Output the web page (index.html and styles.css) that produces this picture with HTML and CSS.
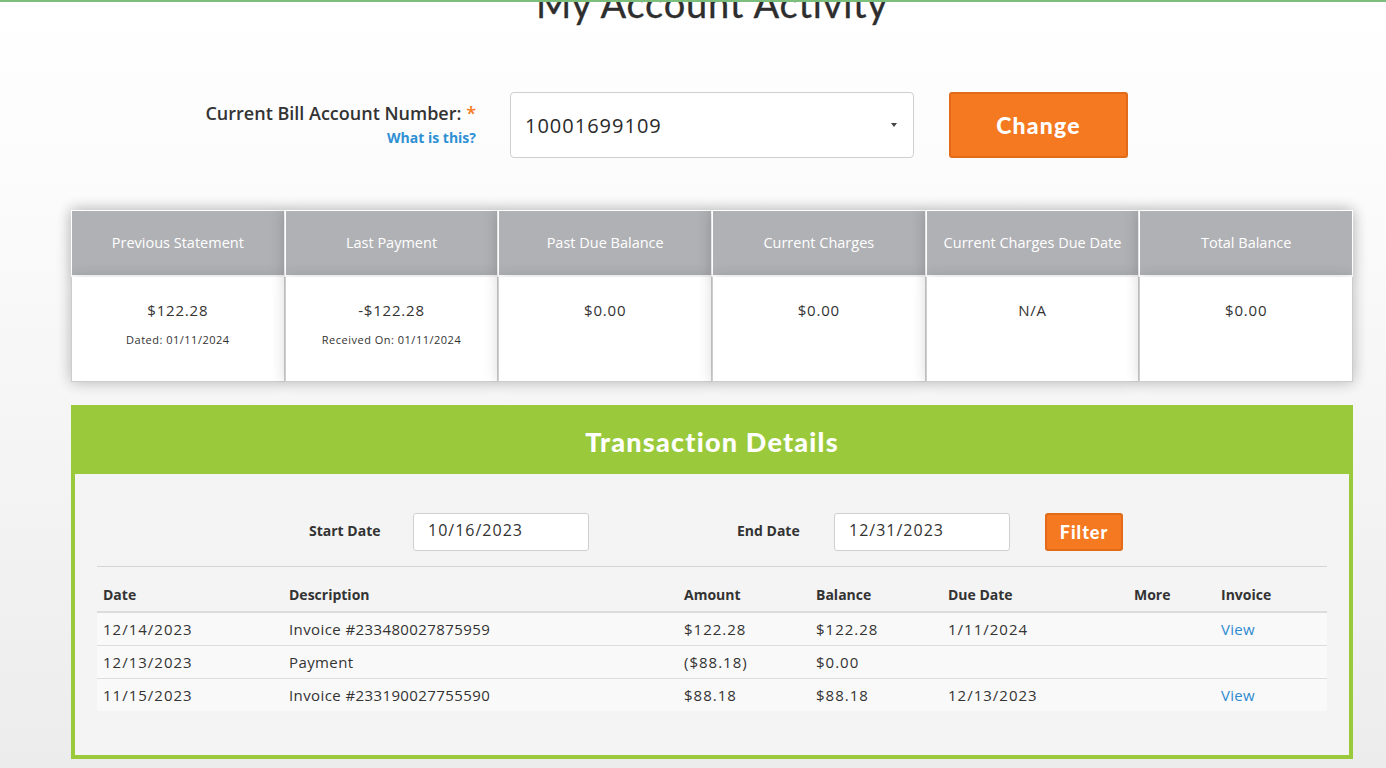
FILE: index.html
```html
<!DOCTYPE html>
<html lang="en">
<head>
<meta charset="utf-8">
<title>My Account Activity</title>
<link rel="stylesheet" href="styles.css">
</head>
<body>
<div class="page">
  <h1 class="title">My Account Activity</h1>

  <div class="account-row">
    <div class="account-label">
      <div class="label-main">Current Bill Account Number: <span class="req">*</span></div>
      <a class="what" href="#">What is this?</a>
    </div>
    <div class="select">
      <span class="select-value">10001699109</span>
      <span class="caret"></span>
    </div>
    <button class="btn-change">Change</button>
  </div>

  <div class="summary">
    <div class="col">
      <div class="head">Previous Statement</div>
      <div class="body"><div class="val">$122.28</div><div class="sub">Dated: 01/11/2024</div></div>
    </div>
    <div class="col">
      <div class="head">Last Payment</div>
      <div class="body"><div class="val">-$122.28</div><div class="sub">Received On: 01/11/2024</div></div>
    </div>
    <div class="col">
      <div class="head">Past Due Balance</div>
      <div class="body"><div class="val">$0.00</div></div>
    </div>
    <div class="col">
      <div class="head">Current Charges</div>
      <div class="body"><div class="val">$0.00</div></div>
    </div>
    <div class="col">
      <div class="head">Current Charges Due Date</div>
      <div class="body"><div class="val">N/A</div></div>
    </div>
    <div class="col">
      <div class="head">Total Balance</div>
      <div class="body"><div class="val">$0.00</div></div>
    </div>
  </div>

  <section class="panel">
    <h2 class="panel-title">Transaction Details</h2>
    <div class="panel-body">
      <div class="filter-row">
        <label class="f-label">Start Date</label>
        <div class="f-input">10/16/2023</div>
        <label class="f-label end">End Date</label>
        <div class="f-input">12/31/2023</div>
        <button class="btn-filter">Filter</button>
      </div>
      <table class="tx">
        <colgroup>
          <col class="c-date"><col class="c-desc"><col class="c-amt"><col class="c-bal"><col class="c-due"><col class="c-more"><col>
        </colgroup>
        <thead>
          <tr><th>Date</th><th>Description</th><th>Amount</th><th>Balance</th><th>Due Date</th><th>More</th><th>Invoice</th></tr>
        </thead>
        <tbody>
          <tr><td>12/14/2023</td><td class="desc">Invoice #233480027875959</td><td>$122.28</td><td>$122.28</td><td>1/11/2024</td><td></td><td><a href="#">View</a></td></tr>
          <tr><td>12/13/2023</td><td class="desc">Payment</td><td>($88.18)</td><td>$0.00</td><td></td><td></td><td></td></tr>
          <tr><td>11/15/2023</td><td class="desc">Invoice #233190027755590</td><td>$88.18</td><td>$88.18</td><td>12/13/2023</td><td></td><td><a href="#">View</a></td></tr>
        </tbody>
      </table>
    </div>
  </section>
</div>
</body>
</html>
```

FILE: styles.css
```css
html, body {
  margin: 0;
  padding: 0;
}
body {
  height: 768px;
  overflow: hidden;
  border-top: 2px solid #7cbf7c;
  box-sizing: border-box;
  background: linear-gradient(#ffffff 0px, #fbfbfb 200px, #ececec 768px);
  font-family: "Open Sans", "Noto Sans", sans-serif;
  color: #333;
}
.page {
  width: 1282px;
  margin-left: 71px;
}
.title {
  margin: -18px 0 0;
  text-align: center;
  font-family: "Lato", sans-serif;
  font-weight: 400;
  font-size: 38px;
  line-height: 38px;
  color: #2e2e2e;
  letter-spacing: 0.8px;
  -webkit-text-stroke: 0.3px #2e2e2e;
}
.account-row {
  display: flex;
  margin-top: 70px;
  height: 66px;
}
.account-label {
  width: 405px;
  text-align: right;
  padding-top: 9px;
  box-sizing: border-box;
}
.label-main {
  font-size: 18px;
  font-weight: 600;
  color: #333;
  line-height: 25px;
}
.req { color: #f47920; }
.what {
  display: inline-block;
  font-size: 14px;
  font-weight: 700;
  color: #2f90d4;
  text-decoration: none;
  line-height: 20px;
  margin-top: -3px;
}
.select {
  margin-left: 34px;
  width: 404px;
  height: 66px;
  box-sizing: border-box;
  border: 1px solid #cfcfcf;
  border-radius: 4px;
  background: #fff;
  display: flex;
  align-items: center;
  justify-content: space-between;
  padding: 0 14px 0 14px;
}
.select-value {
  font-size: 20px;
  letter-spacing: 1px;
  color: #2a2a2a;
}
.caret {
  width: 0; height: 0;
  border-left: 3.5px solid transparent;
  border-right: 3.5px solid transparent;
  border-top: 4px solid #444;
  margin-right: 2px;
}
.btn-change {
  margin-left: 35px;
  width: 179px;
  height: 66px;
  background: #f47920;
  border: 2px solid #e26b1a;
  border-radius: 3px;
  color: #fff;
  font-family: "Lato", sans-serif;
  font-weight: 900;
  font-size: 23px;
  letter-spacing: 1.2px;
  padding: 0;
}

.summary {
  margin-top: 52px;
  display: grid;
  grid-template-columns: repeat(6, 1fr);
  box-shadow: 0 0 14px rgba(0,0,0,0.12);
}
.col {
  display: flex;
  flex-direction: column;
}
.head {
  height: 67px;
  padding-bottom: 1px;
  background: #b0b1b5;
  color: #fff;
  font-size: 14.5px;
  display: flex;
  align-items: center;
  justify-content: center;
  border: 1px solid #fff;
  border-bottom-width: 2px;
  box-sizing: border-box;
  box-shadow: 0 0 14px rgba(0,0,0,0.22);
}
.body {
  height: 105px;
  background: #fff;
  border: 1px solid #cdcdcd;
  border-top: none;
  box-sizing: border-box;
  text-align: center;
  padding-top: 22px;
  box-shadow: 0 0 14px rgba(0,0,0,0.16);
}
.val {
  font-size: 15px;
  letter-spacing: 0.8px;
  line-height: 22px;
  color: #333;
}
.sub {
  font-size: 11px;
  letter-spacing: 0.5px;
  margin-top: 11px;
  color: #333;
}

.panel {
  margin-top: 23px;
  border: 4px solid #9aca3c;
  background: #f4f4f4;
  height: 354px;
  box-sizing: border-box;
}
.panel-title {
  margin: 0;
  background: #9aca3c;
  height: 65px;
  line-height: 66px;
  text-align: center;
  color: #fff;
  font-family: "Lato", sans-serif;
  font-weight: 900;
  font-size: 27px;
  letter-spacing: 1.2px;
}
.panel-body {
  padding: 39px 22px 0 22px;
}
.filter-row {
  display: flex;
  align-items: center;
  height: 38px;
  padding-left: 212px;
  padding-bottom: 15px;
  border-bottom: 1px solid #d4d4d4;
}
.f-label {
  font-size: 14px;
  font-weight: 700;
  color: #333;
  width: 104px;
  margin-top: -4px;
}
.f-label.end { margin-left: 148px; width: 97px; }
.f-input {
  width: 176px;
  height: 38px;
  box-sizing: border-box;
  border: 1px solid #cfcfcf;
  border-radius: 3px;
  background: #fff;
  font-size: 16px;
  letter-spacing: 1px;
  padding-left: 14px;
  line-height: 33px;
  color: #333;
}
.btn-filter {
  margin-left: 35px;
  width: 78px;
  height: 38px;
  background: #f47920;
  border: 2px solid #e26b1a;
  border-radius: 3px;
  color: #fff;
  font-family: "Lato", sans-serif;
  font-weight: 900;
  font-size: 18px;
  letter-spacing: 1px;
  padding: 0;
}
.tx {
  width: 100%;
  border-collapse: collapse;
  margin-top: 10px;
  table-layout: fixed;
}
.c-date { width: 186px; }
.c-desc { width: 395px; }
.c-amt { width: 132px; }
.c-bal { width: 132px; }
.c-due { width: 186px; }
.c-more { width: 87px; }
.tx th {
  text-align: left;
  font-size: 14px;
  font-weight: 700;
  padding: 7px 6px 7px;
  height: 20px;
  border-bottom: 2px solid #dcdcdc;
  color: #333;
}
.tx td {
  font-size: 15px;
  letter-spacing: 1px;
  padding: 0 6px;
  height: 32px;
  border-top: 1px solid #dedede;
  background: #f9f9f9;
  color: #333;
}
.tx td.desc { letter-spacing: 0.4px; }
.tx tbody tr:first-child td { border-top: none; }
.tx td a {
  color: #2f8ad0;
  text-decoration: none;
  letter-spacing: 0.3px;
}
```
